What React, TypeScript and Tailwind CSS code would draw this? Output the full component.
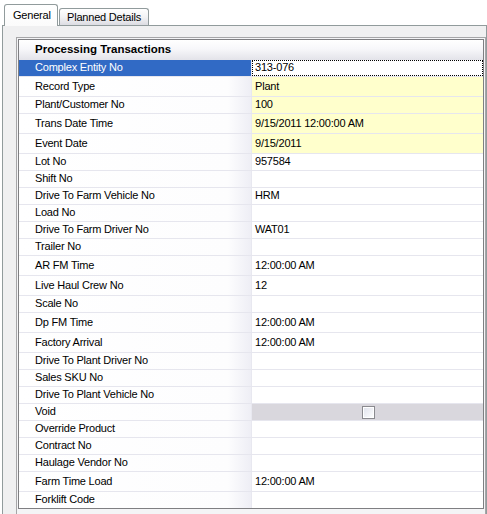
import React from "react";

type Row = { label: string; value?: string; h: number; kind?: "sel" | "req" | "check" };

const rows: Row[] = [
  { label: "Complex Entity No", value: "313-076", h: 17, kind: "sel" },
  { label: "Record Type", value: "Plant", h: 20, kind: "req" },
  { label: "Plant/Customer No", value: "100", h: 17, kind: "req" },
  { label: "Trans Date Time", value: "9/15/2011 12:00:00 AM", h: 20, kind: "req" },
  { label: "Event Date", value: "9/15/2011", h: 20, kind: "req" },
  { label: "Lot No", value: "957584", h: 17 },
  { label: "Shift No", h: 17 },
  { label: "Drive To Farm Vehicle No", value: "HRM", h: 17 },
  { label: "Load No", h: 17 },
  { label: "Drive To Farm Driver No", value: "WAT01", h: 17 },
  { label: "Trailer No", h: 17 },
  { label: "AR FM Time", value: "12:00:00 AM", h: 20 },
  { label: "Live Haul Crew No", value: "12", h: 20 },
  { label: "Scale No", h: 17 },
  { label: "Dp FM Time", value: "12:00:00 AM", h: 20 },
  { label: "Factory Arrival", value: "12:00:00 AM", h: 20 },
  { label: "Drive To Plant Driver No", h: 17 },
  { label: "Sales SKU No", h: 17 },
  { label: "Drive To Plant Vehicle No", h: 17 },
  { label: "Void", h: 17, kind: "check" },
  { label: "Override Product", h: 17 },
  { label: "Contract No", h: 17 },
  { label: "Haulage Vendor No", h: 17 },
  { label: "Farm Time Load", value: "12:00:00 AM", h: 20 },
  { label: "Forklift Code", h: 16 },
];

function GridRow({ r, last }: { r: Row; last: boolean }) {
  const labelCls =
    r.kind === "sel"
      ? "bg-[#316ac5] text-white"
      : "bg-[linear-gradient(to_right,#ffffff_0%,#fdfdfe_90%,#eeeef5_100%)] text-black";
  let valueCls = "bg-white";
  if (r.kind === "req") valueCls = "bg-[#ffffcc]";
  if (r.kind === "check") valueCls = "bg-[#d9d7dd]";
  return (
    <div
      className={`flex ${last ? "" : "border-b border-[#e6e6ee]"}`}
      style={{ height: r.h }}
    >
      <div className={`w-[233px] shrink-0 flex items-center pl-[16px] border-r border-[#e8e8f0] ${labelCls}`}>
        <span className="leading-none whitespace-nowrap pb-[1px]">{r.label}</span>
      </div>
      <div
        className={`flex-1 flex items-center ${
          r.kind === "check" ? "justify-center pl-[2px]" : "pl-[3px]"
        } ${valueCls} ${r.kind === "sel" ? "outline outline-1 outline-dotted outline-black -outline-offset-1" : ""}`}
      >
        {r.kind === "check" ? (
          <div className="w-[13px] h-[13px] border border-[#8a8a8f] bg-[linear-gradient(135deg,#dfe2ec_0%,#f2f3f7_60%,#ffffff_100%)] shadow-[inset_0_0_0_1px_#ffffff]" />
        ) : (
          <span className="leading-none whitespace-nowrap text-black pb-[1px]">{r.value}</span>
        )}
      </div>
    </div>
  );
}

export default function App() {
  return (
    <div className="w-[487px] h-[514px] bg-white overflow-hidden font-['Liberation_Sans',Arial,sans-serif] text-[11px] tracking-[-0.2px] text-black">
      {/* Tabs */}
      <div className="flex items-end pl-[4px] pt-[4px] h-[25px] relative z-10">
        <div className="w-[54px] border border-b-0 border-[#919b9c] rounded-t-[3px] bg-[linear-gradient(to_bottom,#ffffff,#fbfbfb)] flex items-center pl-[8px] mb-[-1px] h-[22px]">
          <span className="leading-none">General</span>
        </div>
        <div className="ml-[1px] w-[90px] h-[17px] border border-b-0 border-[#919b9c] rounded-t-[3px] bg-[linear-gradient(to_bottom,#ffffff,#f3f3f5_50%,#dcdce2)] flex items-center pl-[7px]">
          <span className="leading-none">Planned Details</span>
        </div>
      </div>
      {/* Panel */}
      <div className="ml-[2px] w-[485px] h-[489px] border-t border-l border-r border-[#919b9c] bg-[#f0f0f1] pt-[11px] pl-[13px]">
        <div className="w-[470px] h-[480px] border border-[#a6a6a8] p-[1px] bg-[#f4f4f6]">
          <div className="w-[466px] border border-[#7f7f82] bg-white">
            <div className="h-[20px] flex items-center pl-[16px] bg-[linear-gradient(to_bottom,#ffffff_0%,#f7f7fa_45%,#e3e3e9_100%)]">
              <span className="font-bold text-[11.5px] tracking-normal leading-none">Processing Transactions</span>
            </div>
            {rows.map((r, i) => (
              <GridRow key={r.label} r={r} last={i === rows.length - 1} />
            ))}
          </div>
        </div>
      </div>
    </div>
  );
}
